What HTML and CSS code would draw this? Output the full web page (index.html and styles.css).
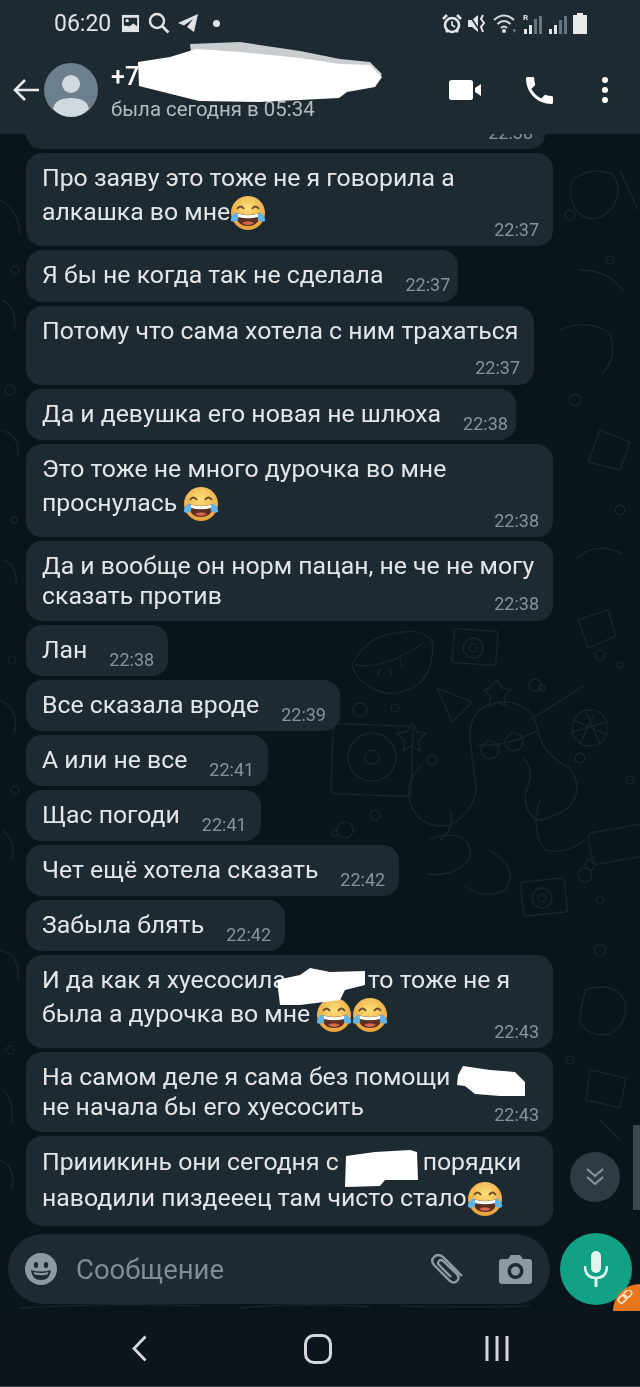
FILE: index.html
```html
<!DOCTYPE html>
<html lang="ru">
<head>
    <meta charset="UTF-8">
    <meta name="viewport" content="width=device-width, initial-scale=1.0">
    <title>Чат</title>
    <link rel="stylesheet" href="styles.css">
</head>
<body>
    <!-- Shared emoji -->
    <svg class="defs" width="0" height="0">
        <defs>
            <radialGradient id="face" cx="50%" cy="35%" r="70%">
                <stop offset="0" stop-color="#fbe07a"/>
                <stop offset="1" stop-color="#e79a35"/>
            </radialGradient>
            <symbol id="laugh" viewBox="0 0 36 36">
                <circle cx="18" cy="18" r="17" fill="url(#face)"/>
                <path d="M7 14q3.500-5 7 0M22 14q3.500-5 7 0" fill="none" stroke="#6b4a2a" stroke-width="1.800"/>
                <path d="M6 18q12 4 24 0q0 13-12 13T6 18z" fill="#5a2f22"/>
                <path d="M7 18.500q11 3.500 22 0l-1 3.500q-10 2.500-20 0z" fill="#fff"/>
                <path d="M12 28q6-3.500 12 0q-6 4-12 0z" fill="#d9654f"/>
                <path d="M6 17q-6 5-5 9q3 2 7-1q1-4-2-8zM30 17q6 5 5 9q-3 2-7-1q-1-4 2-8z" fill="#5db6e8"/>
            </symbol>
        </defs>
    </svg>

    <div class="screen">
        <!-- Status bar and contact header -->
        <header class="top">
            <div class="status">
                <span class="clock">06:20</span>
                <svg class="ic-gallery" viewBox="0 0 20 20"><rect x="1" y="1" width="18" height="18" fill="#dfe3e6"/><path d="M3 4h14v9l-4-3-4 3-6-1z" fill="#1e2a32"/><circle cx="6.500" cy="7" r="1.800" fill="#dfe3e6"/></svg>
                <svg class="ic-search" viewBox="0 0 22 22"><circle cx="9" cy="9" r="7" fill="none" stroke="#dfe3e6" stroke-width="2.400"/><path d="M14 14l6.500 6.500" stroke="#dfe3e6" stroke-width="2.600"/></svg>
                <svg class="ic-plane" viewBox="0 0 20 18"><path d="M20 0L0 9l6 2.500L15 5l-6 8 7 5z" fill="#dfe3e6"/></svg>
                <span class="dot"></span>
                <div class="status-right">
                    <svg width="20" height="21" viewBox="0 0 20 21"><circle cx="10" cy="12" r="7" fill="none" stroke="#e3e6e8" stroke-width="2.600"/><path d="M10 8v4l3 2" fill="none" stroke="#e3e6e8" stroke-width="1.600"/><path d="M1 6l4-4M19 6l-4-4M4 19l2-2M16 19l-2-2" stroke="#e3e6e8" stroke-width="2.600"/></svg>
                    <svg width="19" height="21" viewBox="0 0 19 21"><path d="M0 7h4l6-5v17l-6-5H0z" fill="#e3e6e8"/><path d="M1 2l11 16" stroke="#1e2a32" stroke-width="1.500"/><path d="M15 2l-2 4 3 4-3 4 2 5" fill="none" stroke="#e3e6e8" stroke-width="2"/></svg>
                    <svg width="24" height="21" viewBox="0 0 24 21"><path d="M1 7q10-9 20 0M4.500 11q6.500-6 13 0M8 15q3-3 6 0" fill="none" stroke="#d4d8da" stroke-width="2"/><circle cx="11" cy="18" r="2" fill="#e3e6e8"/><path d="M20 16l3 1-2 3z" fill="#7f8a91"/></svg>
                    <svg width="20" height="21" viewBox="0 0 20 21"><text x="0" y="7" class="roam">R</text><path d="M1 16h3v5H1zM6 12h3v9H6z" fill="#e3e6e8"/><path d="M11 6h3v15h-3zM16 3h3v18h-3z" fill="#69757c"/></svg>
                    <svg width="18" height="21" viewBox="0 0 18 21"><path d="M0 16h3v5H0zM5 12h3v9H5z" fill="#e3e6e8"/><path d="M10 7h3v14h-3zM15 3h3v18h-3z" fill="#69757c"/></svg>
                    <svg class="ic-battery" width="14" height="21" viewBox="0 0 14 21"><path d="M4 0h6v2h4v19H0V2h4z" fill="#e8ebec"/></svg>
                </div>
            </div>
            <div class="contact">
                <svg class="ic-back" viewBox="0 0 26 24"><path d="M12 2L2 12l10 10M2 12h24" fill="none" stroke="#e6e9eb" stroke-width="2.600"/></svg>
                <svg class="avatar" viewBox="0 0 54 54">
                    <circle cx="27" cy="27" r="27" fill="#6b808c"/>
                    <circle cx="27" cy="21" r="9" fill="#cfd9df"/>
                    <path d="M9 46q2-11 18-11t18 11q-8 8-18 8T9 46z" fill="#cfd9df"/>
                </svg>
                <div class="who">
                    <span class="name">+7</span>
                    <span class="seen">была сегодня в 05:34</span>
                </div>
                <div class="actions">
                    <svg class="ic-video" viewBox="0 0 32 20"><rect width="24" height="20" rx="2.500" fill="#fff"/><path d="M26 8l6-4v12l-6-4z" fill="#fff"/></svg>
                    <svg class="ic-phone" viewBox="3 3 18 18"><path d="M6.600 10.800c1.400 2.800 3.800 5.100 6.600 6.600l2.200-2.200c.3-.3.7-.4 1-.2 1.100.4 2.300.6 3.600.6.600 0 1 .4 1 1V20c0 .6-.4 1-1 1C10.600 21 3 13.400 3 4c0-.6.4-1 1-1h3.500c.6 0 1 .4 1 1 0 1.300.2 2.500.6 3.600.1.3 0 .7-.2 1z" fill="#fff"/></svg>
                    <svg class="ic-more" viewBox="0 0 8 28"><circle cx="4" cy="4" r="3" fill="#fff"/><circle cx="4" cy="14" r="3" fill="#fff"/><circle cx="4" cy="24" r="3" fill="#fff"/></svg>
                </div>
            </div>
        </header>

        <main class="chat">
            <!-- Wallpaper doodles -->
            <svg class="doodles" viewBox="0 134 640 1177" fill="none" stroke="#18232b" stroke-width="1.500">
                <path d="M352 665q15-30 45-32 25-6 35 8 3 25-12 42-25 18-48 5-18-10-20-23zM355 665q30 5 68-22M380 668l-2 8M390 668l2 8M400 660l2 8"/>
                <rect x="453" y="630" width="44" height="34" rx="3" transform="rotate(4 475 647)"/>
                <circle cx="473" cy="648" r="10"/><circle cx="473" cy="648" r="4"/>
                <rect x="332" y="725" width="80" height="70" rx="4" transform="rotate(2 372 760)"/>
                <circle cx="372" cy="757" r="24"/><circle cx="372" cy="757" r="7"/>
                <path d="M412 722l5 10 9 1-8 8 2 10-9-5-8 5 2-10-8-8 10-1z"/>
                <path d="M437 688l35 14-20 20z"/>
                <path d="M490 688l-1 0 8-8 5 8 9 2-7 7 2 9-9-4-8 4 2-9-7-7z"/>
                <path d="M470 740q-2-35 32-38 32 0 36 30 6 24 32 36 15 22-2 40-20 12-32 12-16-14-8-34 6-14-4-28M470 740q4 30 6 50-2 20-25 35-30 5-40-20-8-25 12-40"/>
                <path d="M478 745q30 2 58-14M530 720l55-35"/>
                <circle cx="490" cy="750" r="9"/><circle cx="514" cy="742" r="9"/>
                <circle cx="590" cy="728" r="18"/><path d="M574 720l32 14M580 744l14-30M600 744l-14-32M572 732l34-10"/>
                <rect x="590" y="828" width="60" height="32" rx="4" transform="rotate(-10 620 844)"/>
                <rect x="522" y="880" width="44" height="34" rx="3" transform="rotate(-6 544 897)"/><circle cx="542" cy="898" r="10"/><circle cx="542" cy="898" r="4"/>
                <path d="M430 840q20-10 35 0 10 12 2 22-15 15-40 12M490 850q30 20 15 40-20 10-40-4M450 810q5 20-10 30M540 800q-10 30 5 50 20 5 40-10"/>
                <path d="M572 180q20-14 40-6 12 14 0 34-14 16-30 8-16-14-10-36zM560 330q30-12 50 4 8 24-8 40M600 430l30 12-10 28-32-8zM575 560q20-20 48-6M578 620l30-10 8 26-28 12zM620 170l18 40M580 270q30 0 44 22"/>
                <path d="M0 200q18 10 20 34M2 300q16 8 12 30M0 430q20 4 18 26M4 560q14 6 12 26M0 700q20 10 14 34M2 830q14 10 10 30M0 950q20 4 18 30M2 1090q12 8 10 34"/>
                <path d="M585 990q30-10 40 12 4 20-14 32-24 4-32-14zM590 1070l36 8-6 30-34-8zM600 1120l20 20M0 1160q16 6 12 30"/>
                <circle cx="360" cy="710" r="7"/><circle cx="395" cy="708" r="4"/><circle cx="432" cy="760" r="5"/><circle cx="345" cy="830" r="8"/><circle cx="375" cy="815" r="5"/><circle cx="335" cy="833" r="3"/>
                <circle cx="535" cy="685" r="6"/><circle cx="542" cy="688" r="3"/><circle cx="600" cy="655" r="5"/><circle cx="620" cy="665" r="3"/>
                <circle cx="580" cy="758" r="5"/><circle cx="630" cy="780" r="4"/><circle cx="590" cy="865" r="5"/><circle cx="585" cy="875" r="7"/><circle cx="600" cy="900" r="4"/>
                <circle cx="570" cy="215" r="5"/><circle cx="610" cy="260" r="4"/><circle cx="575" cy="400" r="6"/><circle cx="620" cy="510" r="5"/><circle cx="15" cy="270" r="4"/><circle cx="10" cy="390" r="5"/><circle cx="14" cy="520" r="3"/><circle cx="12" cy="660" r="4"/><circle cx="15" cy="790" r="4"/>
                <circle cx="600" cy="950" r="6"/><circle cx="570" cy="1060" r="4"/><circle cx="10" cy="1050" r="4"/>
                <path d="M20 1308q100-6 180-2M240 1308q60-6 130-1M400 1306q60 2 130 0"/>
            </svg>

            <div class="messages">
                <div class="msg cut"><span class="time">22:38</span></div>

                <div class="msg wide"><p>Про заяву это тоже не я говорила а<br>алкашка во мне<svg class="emoji"><use href="#laugh"/></svg></p><span class="time">22:37</span></div>
                <div class="msg row near r2"><p>Я бы не когда так не сделала</p><span class="time">22:37</span></div>
                <div class="msg solo r3"><p>Потому что сама хотела с ним трахаться</p><span class="time">22:37</span></div>
                <div class="msg row near"><p>Да и девушка его новая не шлюха</p><span class="time">22:38</span></div>
                <div class="msg wide"><p>Это тоже не много дурочка во мне<br>проснулась <svg class="emoji"><use href="#laugh"/></svg></p><span class="time">22:38</span></div>
                <div class="msg wide tight"><p>Да и вообще он норм пацан, не че не могу<br>сказать против</p><span class="time">22:38</span></div>
                <div class="msg row"><p>Лан</p><span class="time">22:38</span></div>
                <div class="msg row"><p>Все сказала вроде</p><span class="time">22:39</span></div>
                <div class="msg row"><p>А или не все</p><span class="time">22:41</span></div>
                <div class="msg row"><p>Щас погоди</p><span class="time">22:41</span></div>
                <div class="msg row"><p>Чет ещё хотела сказать</p><span class="time">22:42</span></div>
                <div class="msg row"><p>Забыла блять</p><span class="time">22:42</span></div>
                <div class="msg wide"><p>И да как я хуесосила<span class="gap-a"></span>то тоже не я<br>была а дурочка во мне <svg class="emoji"><use href="#laugh"/></svg><svg class="emoji"><use href="#laugh"/></svg></p><span class="time">22:43</span></div>
                <div class="msg wide tight"><p>На самом деле я сама без помощи<br>не начала бы его хуесосить</p><span class="time">22:43</span></div>
                <div class="msg wide last"><p>Прииикинь они сегодня с<span class="gap-b"></span>порядки<br>наводили пиздееец там чисто стало<svg class="emoji"><use href="#laugh"/></svg></p></div>
            </div>

            <span class="scrollbar"></span>
            <button class="to-bottom">
                <svg viewBox="0 0 22 22"><path d="M3 3l8 7 8-7M3 11l8 7 8-7" fill="none" stroke="#8a979f" stroke-width="2"/></svg>
            </button>

            <!-- Message box -->
            <div class="composer">
                <div class="input">
                    <svg class="ic-smile" viewBox="0 0 32 32"><circle cx="16" cy="16" r="16" fill="#8d9aa2"/><ellipse cx="11" cy="12" rx="2.200" ry="3" fill="#1e2a32"/><ellipse cx="21" cy="12" rx="2.200" ry="3" fill="#1e2a32"/><path d="M6 17q10 3 20 0q-1 10-10 10T6 17z" fill="#1e2a32"/><path d="M8.500 19q7.500 2 15 0l-1 2.500q-6.500 1.500-13 0z" fill="#8d9aa2"/></svg>
                    <span class="placeholder">Сообщение</span>
                    <svg class="ic-clip" viewBox="0 0 36 34"><path d="M32 24L13 5Q8 1 4 5t1 9l15 15q4 3 7 0t0-7L13 9q-2-2-4 0t0 4l12 12" fill="none" stroke="#8d9aa2" stroke-width="2.400"/></svg>
                    <svg class="ic-camera" viewBox="0 0 33 30"><path d="M3 5h6l3-4h9l3 4h6q3 0 3 3v19q0 3-3 3H3q-3 0-3-3V8q0-3 3-3z" fill="#8d9aa2"/><circle cx="16.500" cy="17" r="8" fill="#1e2a32"/><circle cx="16.500" cy="17" r="4.500" fill="#8d9aa2"/></svg>
                </div>
                <button class="mic">
                    <svg viewBox="0 0 24 36"><rect x="7" y="0" width="10" height="22" rx="5" fill="#e0f5ee"/><path d="M1 15q0 12 11 12t11-12" fill="none" stroke="#e0f5ee" stroke-width="2.600"/><path d="M12 27v9" stroke="#e0f5ee" stroke-width="3"/></svg>
                </button>
            </div>

            <span class="link-tag">
                <svg viewBox="0 0 18 18"><rect x="1" y="6" width="9" height="6" rx="3" transform="rotate(-45 5.500 9)" fill="none" stroke="#ffe3c8" stroke-width="1.600"/><rect x="6" y="1" width="9" height="6" rx="3" transform="rotate(-45 10.500 4)" fill="none" stroke="#ffe3c8" stroke-width="1.600"/></svg>
            </span>
        </main>

        <!-- Android navigation -->
        <nav class="nav">
            <svg class="nav-back" viewBox="0 0 15 27"><path d="M13.500 1.500L2 13.500l11.500 12" fill="none" stroke="#d4d8da" stroke-width="2.800"/></svg>
            <span class="nav-home"></span>
            <svg class="nav-recent" viewBox="0 0 24 25"><path d="M2 0v25M12 0v25M22 0v25" stroke="#d4d8da" stroke-width="3"/></svg>
        </nav>

        <!-- White marker over names -->
        <svg class="scribbles" viewBox="0 0 640 1387">
            <path d="M190 44l50-2 60 9 40 8 30 3 12 12-9 10-28 6-8 6-80 5-60-1z" fill="#c9cdd0"/>
            <path d="M138 62l32-5 26-8 44 3 60 6 40 6 30 1 12 12-7 10-28 5-8 6-80 4-60-1-40-10-20-5z" fill="#fff"/>
            <path d="M277 980l23-5 10-7 20 4 35-1v14l-20 5-5 10-40 5-20 0z" fill="#fff"/>
            <path d="M463 1066l27 4 25 2 10 10v14l-25 0-25-2-10-8-8-1 1-10z" fill="#fff"/>
            <path d="M346 1156l29-4 35-2 7 2 1 28-33 0-5 6-35 1z" fill="#fff"/>
        </svg>
    </div>
</body>
</html>
```

FILE: styles.css
```css
/* Global styles */
body {
    margin: 0;
    background: #0a141b;
    font-family: Roboto, "Liberation Sans", sans-serif;
}

p {
    margin: 0;
}

button {
    border: none;
    padding: 0;
}

.defs {
    display: block;
    height: 0;
}

.screen {
    position: relative;
    display: flex;
    flex-direction: column;
    width: 640px;
    height: 1387px;
    overflow: hidden;
    filter: blur(0.7px);
}

/* Status bar */
.top {
    flex: none;
    height: 134px;
    background: #1e2a32;
    color: #fff;
}

.status {
    display: flex;
    align-items: center;
    height: 46px;
    padding-left: 54px;
}

.clock {
    font-size: 23px;
    color: #dfe3e6;
    margin-right: 10px;
}

.ic-gallery {
    width: 19px;
    height: 19px;
    margin-right: 8px;
}

.ic-search {
    width: 22px;
    height: 22px;
    margin-right: 8px;
}

.ic-plane {
    width: 20px;
    height: 18px;
    margin-right: 15px;
}

.dot {
    width: 7px;
    height: 7px;
    border-radius: 50%;
    background: #dfe3e6;
}

.status-right {
    display: flex;
    align-items: center;
    gap: 6px;
    margin-left: auto;
    margin-right: 53px;
}

.roam {
    font-size: 8px;
    font-weight: 700;
    fill: #e3e6e8;
}

/* Contact header */
.contact {
    display: flex;
    align-items: center;
    height: 88px;
    padding-left: 13px;
}

.ic-back {
    width: 26px;
    height: 24px;
    margin-right: 5px;
}

.avatar {
    width: 54px;
    height: 54px;
    margin-right: 13px;
}

.who {
    display: flex;
    flex-direction: column;
}

.name {
    font-size: 25px;
    font-weight: 500;
    line-height: 30px;
    margin-top: 4px;
}

.seen {
    font-size: 20.4px;
    line-height: 28px;
    margin-top: 3px;
    color: #b5bcc1;
}

.actions {
    display: flex;
    align-items: center;
    margin-left: auto;
    padding-right: 31px;
}

.ic-video {
    width: 32px;
    height: 20px;
    margin-right: 45px;
}

.ic-phone {
    width: 27px;
    height: 27px;
    margin-right: 48px;
}

.ic-more {
    width: 8px;
    height: 28px;
}

/* Chat area */
.chat {
    position: relative;
    flex: 1;
    display: flex;
    flex-direction: column;
    min-height: 0;
    overflow: hidden;
    background: #0a141b;
}

.doodles {
    position: absolute;
    inset: 0;
    width: 100%;
    height: 100%;
}

.messages {
    position: relative;
    flex: 1;
    display: flex;
    flex-direction: column;
    align-items: flex-start;
    gap: 4px;
    min-height: 0;
    padding-left: 26px;
    overflow: hidden;
}

/* Message bubbles */
.msg {
    flex: none;
    box-sizing: border-box;
    padding: 8px 14px 5px 16px;
    background: #1e2a32;
    border-radius: 16px;
    color: #e3e6e8;
    font-size: 24.8px;
    line-height: 34px;
}

.time {
    display: block;
    margin-top: -10px;
    font-size: 18px;
    line-height: 22px;
    text-align: right;
    color: #87939b;
}

.wide {
    width: 527px;
}

.cut {
    width: 519px;
    height: 15px;
    padding: 0 12px 0 0;
    border-radius: 0 0 16px 16px;
    overflow: hidden;
}

.cut .time {
    margin-top: -12px;
}

.row {
    display: flex;
    height: 51px;
}

.row .time {
    margin: 16px 0 0 22px;
}

.near {
    padding-right: 8px;
}

.r2 {
    height: 52px;
}

.solo {
    width: 508px;
    height: 79px;
}

.solo .time {
    margin-top: 9px;
}

.tight {
    height: 80px;
    padding-top: 10px;
    padding-bottom: 4px;
    line-height: 30px;
}

.tight .time {
    margin-top: -18px;
}

.last {
    height: 90px;
    line-height: 36px;
}

.emoji {
    width: 36px;
    height: 36px;
    margin: -8px 0;
    vertical-align: middle;
}

.gap-a {
    display: inline-block;
    width: 82px;
}

.gap-b {
    display: inline-block;
    width: 84px;
}

.scrollbar {
    position: absolute;
    top: 991px;
    right: 0;
    width: 7px;
    height: 85px;
    background: #3a4750;
}

.to-bottom {
    position: absolute;
    top: 1018px;
    left: 570px;
    width: 50px;
    height: 50px;
    border-radius: 50%;
    background: #2f3b43;
}

.to-bottom svg {
    display: block;
    width: 22px;
    height: 22px;
    margin: auto;
}

/* Message box */
.composer {
    position: relative;
    flex: none;
    display: flex;
    align-items: center;
    gap: 10px;
    height: 72px;
    margin: 6px 0;
    padding-left: 8px;
}

.input {
    display: flex;
    align-items: center;
    box-sizing: border-box;
    width: 542px;
    height: 70px;
    padding: 0 18px 0 17px;
    border-radius: 35px;
    background: #1e2a32;
}

.ic-smile {
    width: 32px;
    height: 32px;
    margin-right: 19px;
}

.placeholder {
    font-size: 27.5px;
    color: #7f8c94;
}

.ic-clip {
    width: 36px;
    height: 34px;
    margin-left: auto;
    margin-right: 33px;
}

.ic-camera {
    width: 33px;
    height: 30px;
}

.mic {
    display: flex;
    align-items: center;
    justify-content: center;
    width: 72px;
    height: 72px;
    border-radius: 50%;
    background: #12a184;
}

.mic svg {
    width: 24px;
    height: 36px;
}

.link-tag {
    position: absolute;
    right: -27px;
    bottom: -27px;
    width: 54px;
    height: 54px;
    border-radius: 50%;
    background: #e8761e;
}

.link-tag svg {
    position: absolute;
    top: 6px;
    left: 4px;
    width: 18px;
    height: 18px;
}

/* Navigation bar */
.nav {
    flex: none;
    display: grid;
    grid-template-columns: repeat(3, 179px);
    justify-content: center;
    justify-items: center;
    align-items: center;
    box-sizing: border-box;
    height: 76px;
    padding: 0 4px 0 0;
    background: #0d141c;
    border-bottom: 1px solid #3a4248;
}

.nav-back {
    width: 15px;
    height: 27px;
}

.nav-home {
    box-sizing: border-box;
    width: 28px;
    height: 30px;
    border: 3px solid #d4d8da;
    border-radius: 10px;
}

.nav-recent {
    width: 24px;
    height: 25px;
}

/* White marker */
.scribbles {
    position: absolute;
    inset: 0;
    width: 100%;
    height: 100%;
}
```
